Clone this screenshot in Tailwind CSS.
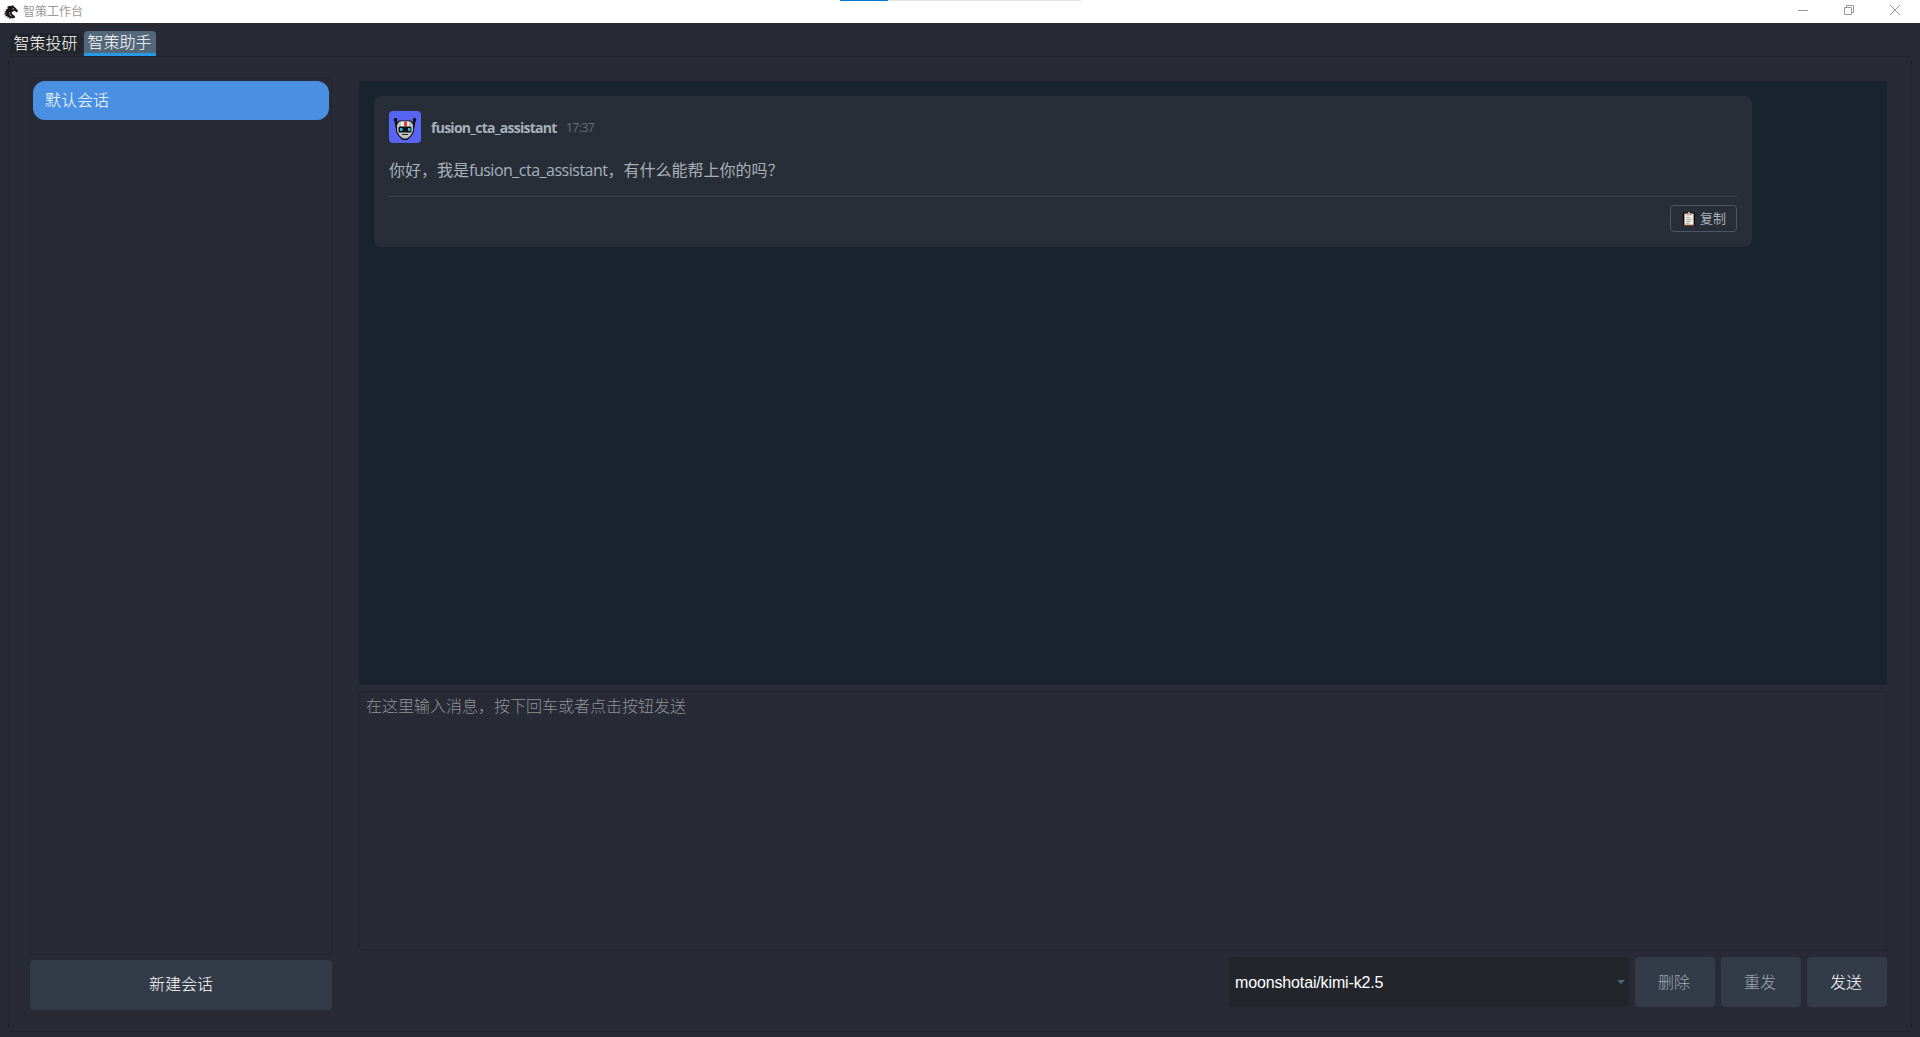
<!DOCTYPE html>
<html lang="zh-CN">
<head>
  <meta charset="UTF-8">
  <meta name="viewport" content="width=device-width, initial-scale=1.0">
  <title>智策工作台</title>
  <script src="https://cdn.jsdelivr.net/npm/@tailwindcss/browser@4"></script>
</head>
<body class="h-screen overflow-hidden flex flex-col bg-[#282b36] text-white text-base font-light font-['Liberation_Sans','Noto_Sans_CJK_SC',sans-serif]">
  <!-- Title bar -->
  <header class="relative h-[23px] shrink-0 bg-white flex items-center justify-between text-[#999999]">
    <div class="flex items-center pl-[3px] gap-[5px]">
      <svg class="w-[15px] h-[14px]" viewBox="0 0 15 14" fill="#1d1718">
        <path d="M4.500 1.500 7 .8 8.500.9 10.300 0 10.500 1.300 12.500 2.800 14.900 5.400 14.500 7 13.300 7.200 12 6 10.200 6.200 8.700 7.500 9 9 11.500 10.800 12.300 12 11 13.200 8 13.200 6.500 14 6.200 12.300 4.200 12.800 4.500 11 1.800 11.500 3 9.600 0 9.300 2.800 7.900 1.300 6.600 3.300 6 2.500 4.400 4.600 4Z"/>
        <path d="M9.500 3.500h1.500v.7H9.500zM6.500 7.500 7.200 7 7 9.500 9 11.800 6.800 10.300z" fill="#fff"/>
      </svg>
      <span class="text-xs font-normal leading-none">智策工作台</span>
    </div>
    <div class="flex items-center gap-9 pr-5 -mt-[3px]">
      <svg class="w-[10px] h-[10px]" viewBox="0 0 10 10" stroke="#999"><path d="M0 5.5h10"/></svg>
      <svg class="w-[10px] h-[10px]" viewBox="0 0 10 10" stroke="#999" fill="none"><path d="M.5 2.5h7v7h-7zM2.5 2.5v-2h7v7h-2"/></svg>
      <svg class="w-[10px] h-[10px]" viewBox="0 0 10 10" stroke="#999"><path d="M0 0l10 10M10 0L0 10"/></svg>
    </div>
    <!-- Loading strip on the top edge -->
    <div class="absolute top-0 left-[840px] w-[241px] h-px bg-[#e5e5e5]"><div class="w-12 h-px bg-[#0078d7]"></div></div>
  </header>

  <!-- Tabs -->
  <nav class="h-[33px] shrink-0 flex items-end pl-[10px] gap-[2px] leading-none whitespace-nowrap">
    <div class="w-[72px] h-[21px] mb-[2px] pr-px rounded-t bg-[#22252b] flex items-center justify-center">智策投研</div>
    <div class="w-[72px] h-[25px] pt-px pr-px rounded-t bg-[#54687a] border-b-3 border-[#259ae9] flex items-center justify-center">智策助手</div>
  </nav>

  <main class="flex-1 min-h-0 ml-2 mr-2 mb-[5px] border border-[#22242b] rounded flex pt-[21px] pl-[21px] pr-6 pb-[21px]">
    <!-- Sessions -->
    <aside class="w-[302px] flex flex-col gap-[5px]">
      <div class="flex-1 rounded border border-[#22242b] px-[2px] pt-[2px]">
        <div class="h-[39px] rounded-xl bg-[#4a90e2] pl-3 flex items-center leading-none">默认会话</div>
      </div>
      <button class="h-[50px] rounded bg-[#343b48] leading-none">新建会话</button>
    </aside>

    <section class="flex-1 ml-[27px] pt-[3px] flex flex-col">
      <!-- Messages -->
      <div class="h-[604px] bg-[#19232d] pt-[15px] pl-[15px]">
        <article class="w-[1378px] h-[151px] rounded-lg bg-[#272e37] p-[15px] text-[#a9b1bc] font-['Open_Sans','Noto_Sans_CJK_SC',sans-serif]">
          <div class="flex items-center h-8">
            <svg class="w-8 h-8" viewBox="0 0 32 32">
              <rect width="32" height="32" rx="4" fill="#5865f2"/>
              <path d="M6.500 8.500 8 17M25.500 8.500 24 17" stroke="#111" stroke-width="2.600"/>
              <circle cx="6.500" cy="8.500" r="1.700" fill="#111"/><circle cx="25.500" cy="8.500" r="1.700" fill="#111"/>
              <path d="M7 13 10 9.500H22L25 13V20.500L22.500 25 18.500 29H13.500L9.500 25 7 20.500Z" fill="#111"/>
              <path d="M8 13.500 10.500 10.500H21.500L24 13.500V20L21.500 24.500 18 27.500H14L10.500 24.500 8 20Z" fill="#bfc1c3"/>
              <path d="M12 10.500h8V15h-8z" fill="#eee"/><path d="M15 10.500h3V15h-3z" fill="#ef3b24"/>
              <rect x="9.500" y="15.500" width="13" height="6" rx="1.500" fill="#111"/>
              <path d="M11 17h2.500v3H11zM19 17h2.500v3H19z" fill="#24b8df"/>
              <path d="M13 23.500h6" stroke="#222"/>
            </svg>
            <span class="ml-[10px] mt-[2px] w-[125px] text-sm font-bold tracking-[-0.74px] whitespace-nowrap">fusion_cta_assistant</span>
            <span class="ml-[10px] mt-[2px] text-xs font-normal text-[#696f79] tracking-[-0.5px]">17:37</span>
          </div>
          <p class="mt-[15px] h-6 leading-6 font-normal whitespace-nowrap">你好，我是<span class="tracking-[-0.5px]">fusion_cta_assistant</span>，有什么能帮上你的吗？</p>
          <div class="mt-[14px] border-t border-[#3c4550] pt-2 flex justify-end">
            <button class="w-[67px] h-[27px] pl-[2px] rounded border border-[#4b5766] flex items-center justify-center gap-[5px] text-[13px] leading-none font-normal">
              <svg class="w-3 h-[14px] mt-px" viewBox="0 0 12 14">
                <rect width="12" height="14" y="0.5" rx="1.3" fill="#080808"/>
                <path d="M1 1.5h10v12H1z" fill="#c08b55"/><path d="M2 2h8v10.500H2z" fill="#eee"/>
                <path d="M3 1.500h6v2H3z" fill="#bbb"/><path d="M5 0h2v2H5z" fill="#aaa"/>
                <path d="M3 5.500h4M3 7.500h6M3 9.500h5M3 11.500h3" stroke="#aaa"/>
              </svg>
              复制
            </button>
          </div>
        </article>
      </div>
      <!-- Input -->
      <div class="mt-[6px] h-[260px] rounded border border-[#22242b] pt-[7px] pl-[6px] leading-none text-[#919297]">在这里输入消息，按下回车或者点击按钮发送</div>
      <div class="mt-[6px] flex justify-end gap-[6px] leading-none">
        <div class="w-[400px] h-[50px] rounded bg-[#22252c] pl-[6px] pr-1 flex items-center justify-between font-normal">
          <span class="mt-[2px] tracking-[-0.14px]">moonshotai/kimi-k2.5</span>
          <svg class="w-2 h-1" viewBox="0 0 8 4" fill="#54687a"><path d="M0 0h8L4 4z"/></svg>
        </div>
        <button class="w-20 h-[50px] pt-[2px] pr-[2px] rounded bg-[#343b48] text-[#9da9b5]">删除</button>
        <button class="w-20 h-[50px] pt-[2px] pr-[2px] rounded bg-[#343b48] text-[#9da9b5]">重发</button>
        <button class="w-20 h-[50px] pt-[2px] pr-[2px] rounded bg-[#343b48]">发送</button>
      </div>
    </section>
  </main>
</body>
</html>
